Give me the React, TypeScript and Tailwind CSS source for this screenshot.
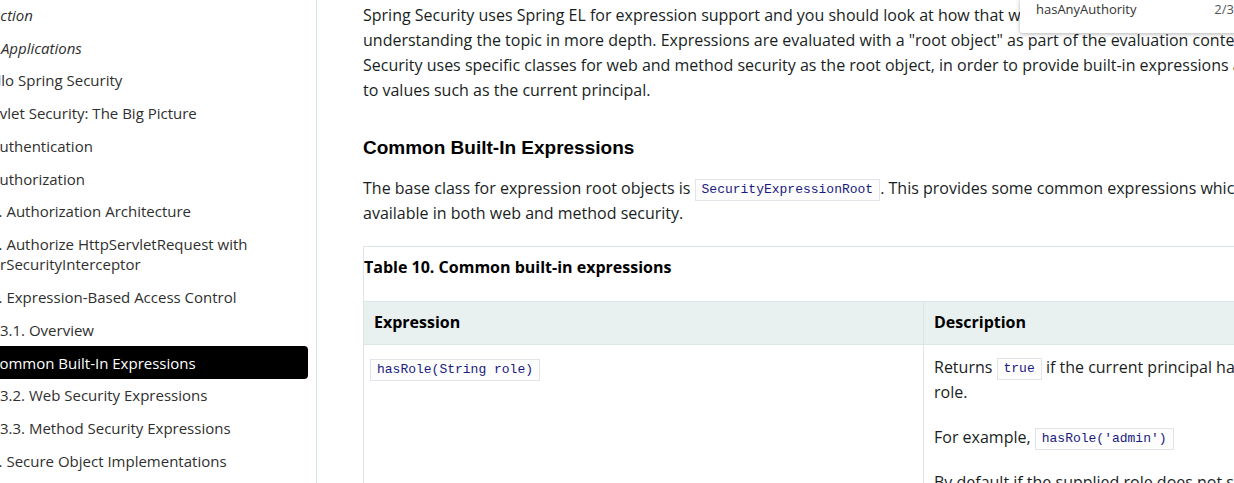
import React from "react";

type NavItem = { lines: { text: string; off: string }[]; italic?: boolean; selected?: boolean };

const nav: NavItem[] = [
  { lines: [{ text: "Introduction", off: "-ml-[49px]" }], italic: true },
  { lines: [{ text: "Servlet Applications", off: "-ml-[47px]" }], italic: true },
  { lines: [{ text: "Hello Spring Security", off: "-ml-[22px]" }] },
  { lines: [{ text: "Servlet Security: The Big Picture", off: "-ml-[23px]" }] },
  { lines: [{ text: "Authentication", off: "-ml-[10px]" }] },
  { lines: [{ text: "Authorization", off: "-ml-[10px]" }] },
  { lines: [{ text: "1. Authorization Architecture", off: "-ml-[10px]" }] },
  {
    lines: [
      { text: "2. Authorize HttpServletRequest with", off: "-ml-[10px]" },
      { text: "FilterSecurityInterceptor", off: "-ml-[29px]" },
    ],
  },
  { lines: [{ text: "3. Expression-Based Access Control", off: "-ml-[10px]" }] },
  { lines: [{ text: "3.1. Overview", off: "ml-0" }] },
  { lines: [{ text: "Common Built-In Expressions", off: "-ml-[10px]" }], selected: true },
  { lines: [{ text: "3.2. Web Security Expressions", off: "ml-0" }] },
  { lines: [{ text: "3.3. Method Security Expressions", off: "ml-0" }] },
  { lines: [{ text: "4. Secure Object Implementations", off: "-ml-[10px]" }] },
];

function Code({ children }: { children: React.ReactNode }) {
  return (
    <code className="inline-block border border-[#e1e5ea] bg-[#fdfdfd] px-[6px] text-[13px] leading-[20px] text-[#1a1a80] [font-family:'Liberation_Mono',monospace] align-[1px]">
      {children}
    </code>
  );
}

export default function App() {
  return (
    <div className="relative flex h-[483px] w-[1234px] overflow-hidden bg-white [font-family:'Open_Sans',sans-serif]">
      <nav className="w-[317px] shrink-0 overflow-hidden border-r border-[#d9e4e4] pr-[8px]">
        <div className="-mt-[1.6px]">
          {nav.map((item, i) => (
            <div
              key={i}
              className={
                "py-[6.4px] text-[15px] leading-[20px] " +
                (item.selected ? "rounded-r-[4px] bg-black text-white" : "text-[#2f2f2f]") +
                (item.italic ? " italic" : "")
              }
            >
              {item.lines.map((l, j) => (
                <div key={j} className={"whitespace-nowrap " + l.off}>
                  {l.text}
                </div>
              ))}
            </div>
          ))}
        </div>
      </nav>

      <main className="min-w-0 flex-1 overflow-hidden pl-[46px] pt-[3px] text-[#191e1e]">
        <div className="w-[1100px]">
          <p className="whitespace-nowrap text-[16px] leading-[25px]">
            Spring Security uses Spring EL for expression support and you should look at how that works if you are interested in
            <br />
            understanding the topic in more depth. Expressions are evaluated with a "root object" as part of the evaluation context. Spring
            <br />
            Security uses specific classes for web and method security as the root object, in order to provide built-in expressions and access
            <br />
            to values such as the current principal.
          </p>

          <h4 className="mt-[31px] text-[19px] font-bold leading-[28px] text-black [font-family:'Liberation_Sans',Arial,sans-serif]">
            Common Built-In Expressions
          </h4>

          <p className="mt-[14px] whitespace-nowrap text-[16px] leading-[25px]">
            The base class for expression root objects is <Code>SecurityExpressionRoot</Code>. This provides some common expressions which are
            <br />
            available in both web and method security.
          </p>

          <div className="mt-[20px] w-[1000px] border border-r-0 border-[#dce6e6]">
            <div className="pb-[23px] pt-[9px] text-[16px] font-bold leading-[22px] text-black">
              Table 10. Common built-in expressions
            </div>
            <div className="grid grid-cols-[559px_1fr]">
              <div className="border-y border-[#dce6e6] bg-[#e9f0f0] px-[10px] pb-[11px] pt-[9px] text-[16px] font-bold leading-[22px] text-black">
                Expression
              </div>
              <div className="border-y border-l border-[#dce6e6] bg-[#e9f0f0] px-[10px] pb-[11px] pt-[9px] text-[16px] font-bold leading-[22px] text-black">
                Description
              </div>
              <div className="px-[6px] pt-[11px]">
                <Code>hasRole(String role)</Code>
              </div>
              <div className="border-l border-[#dce6e6] px-[10px] pt-[10px] text-[16px] leading-[25px]">
                <p>
                  Returns <Code>true</Code> if the current principal has the specified
                  <br />
                  role.
                </p>
                <p className="mt-[20px]">
                  For example, <Code>hasRole('admin')</Code>
                </p>
                <p className="mt-[20px]">By default if the supplied role does not start with 'ROLE_' it will be added.</p>
              </div>
            </div>
          </div>
        </div>
      </main>

      <div className="absolute left-[1020px] top-[-2px] flex h-[35px] w-[240px] items-start justify-between rounded-[3px] bg-white pl-[16px] pr-[26px] pt-[2px] text-[13px] leading-[18px] text-[#333] shadow-[0_1px_4px_rgba(0,0,0,0.3)]">
        <span>hasAnyAuthority</span>
        <span className="text-[#555]">2/3</span>
      </div>
    </div>
  );
}
